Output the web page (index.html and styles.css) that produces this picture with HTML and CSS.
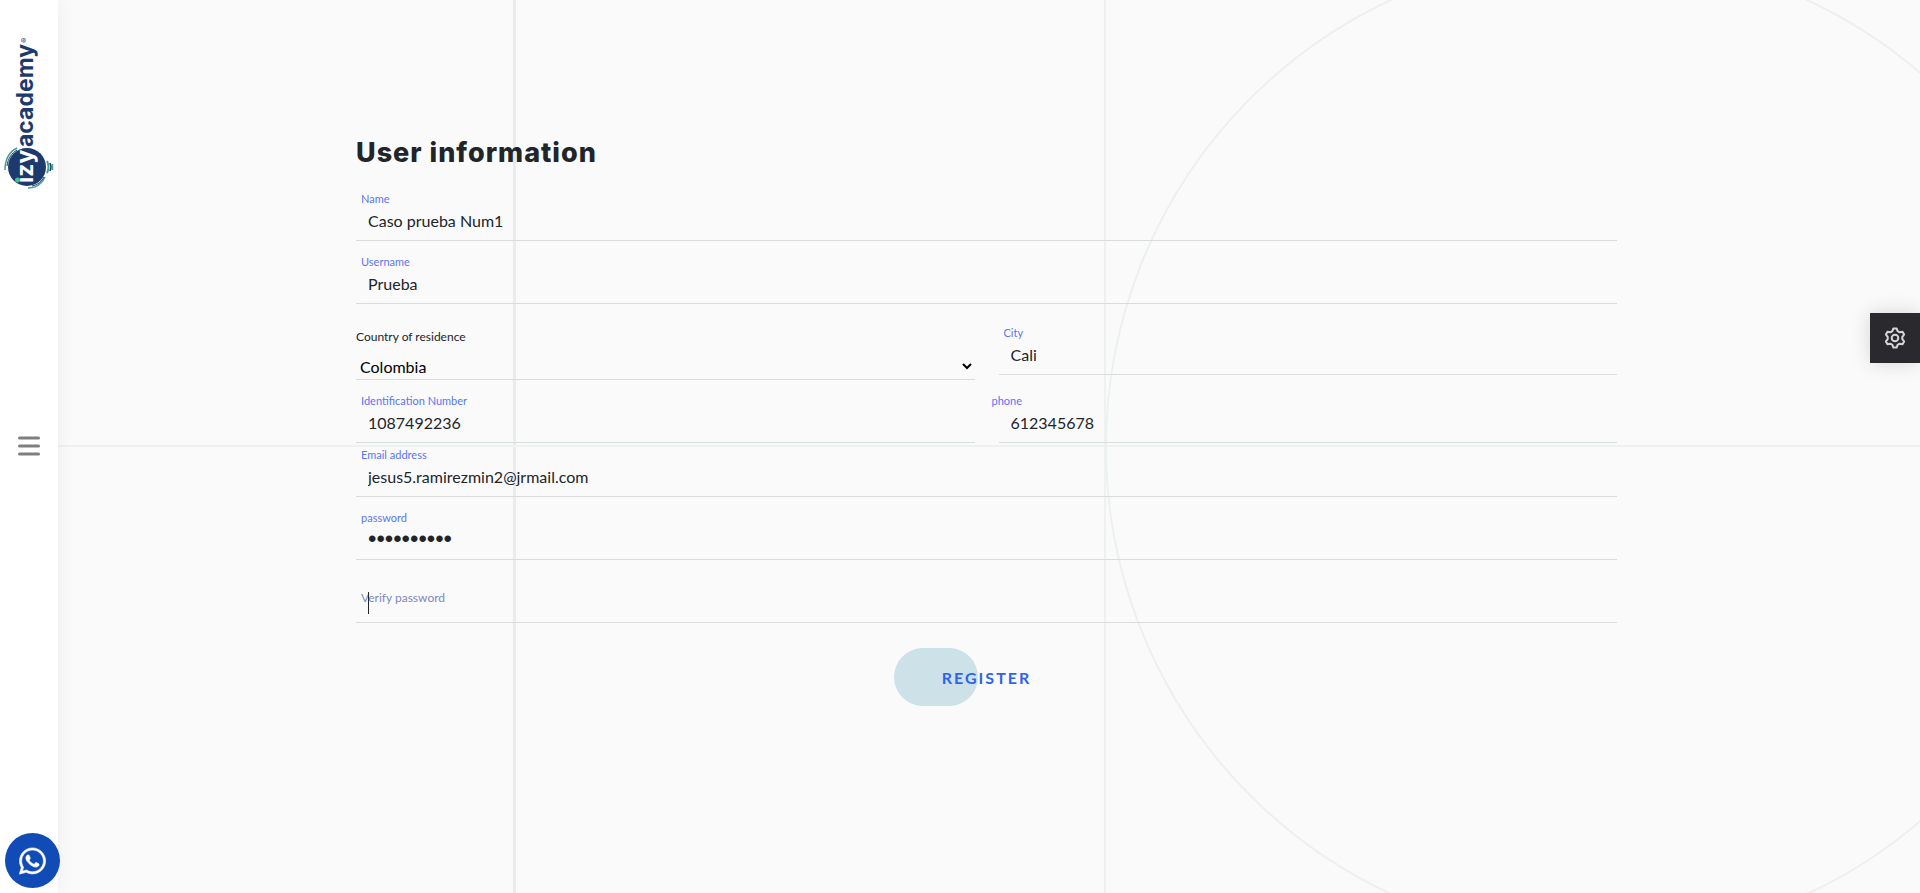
FILE: index.html
```html
<!DOCTYPE html>
<html lang="en">
<head>
<meta charset="utf-8">
<meta name="viewport" content="width=device-width, initial-scale=1">
<title>User information</title>
<link rel="stylesheet" href="styles.css">
</head>
<body>
<div class="page">
  <aside class="sidebar">
    <a class="logo" href="#" aria-label="izyacademy">
      <svg width="50" height="156" viewBox="0 0 50 156">
        <circle cx="23" cy="131" r="19" fill="#1d3a6e"/>
        <path d="M1 134C1 124 5 116 13 112" fill="none" stroke="#45a093" stroke-width="1.5"/>
        <path d="M3 130C4 122 8 117 13 114" fill="none" stroke="#1d3a6e" stroke-width="1"/>
        <path d="M24 152C32 152 38 148 41 141" fill="none" stroke="#45a093" stroke-width="1.5"/>
        <path d="M28 150C34 149 38 145 40 141" fill="none" stroke="#1d3a6e" stroke-width="1"/>
        <path d="M43 125Q46 131 43 137" fill="none" stroke="#45a093" stroke-width="2"/>
        <path d="M46 127Q48 131 46 135" fill="none" stroke="#1d3a6e" stroke-width="1.5"/>
        <path d="M48.500 128V134" stroke="#45a093" stroke-width="1.5"/>
        <g transform="translate(29 147) rotate(-90)">
          <text class="logo-izy" x="0" y="0">ızy</text>
          <text class="logo-word" x="36" y="0">academy</text>
          <text class="logo-mark" x="140" y="-6">®</text>
        </g>
        <circle cx="13.500" cy="144" r="2.500" fill="#3fc08f"/>
      </svg>
    </a>
    <button class="menu" type="button" aria-label="Menu"><span></span><span></span><span></span></button>
    <a class="chat" href="#" aria-label="WhatsApp">
      <svg width="27" height="30" viewBox="0 0 448 512"><path fill="#fff" stroke="#fff" stroke-width="10" d="M380.9 97.1C339 55.1 283.2 32 223.9 32c-122.4 0-222 99.6-222 222 0 39.100 10.200 77.300 29.600 111L0 480l117.700-30.900c32.400 17.700 68.900 27 106.100 27h.1c122.300 0 224.100-99.600 224.100-222 0-59.300-25.200-115-67.100-157zm-157 341.600c-33.200 0-65.700-8.900-94-25.700l-6.700-4-69.800 18.300L72 359.200l-4.400-7c-18.500-29.400-28.200-63.300-28.200-98.200 0-101.700 82.800-184.500 184.600-184.500 49.300 0 95.600 19.200 130.400 54.100 34.800 34.900 56.200 81.200 56.100 130.500 0 101.800-84.900 184.600-186.600 184.600zm101.200-138.200c-5.500-2.800-32.800-16.200-37.900-18-5.100-1.900-8.800-2.800-12.500 2.800-3.700 5.600-14.300 18-17.600 21.800-3.200 3.700-6.500 4.200-12 1.400-32.600-16.300-54-29.100-75.500-66-5.700-9.800 5.700-9.100 16.300-30.300 1.800-3.700.9-6.900-.5-9.700-1.400-2.800-12.500-30.100-17.100-41.200-4.500-10.800-9.100-9.300-12.500-9.500-3.200-.2-6.900-.2-10.600-.2-3.700 0-9.700 1.400-14.800 6.900-5.100 5.600-19.400 19-19.400 46.300 0 27.300 19.900 53.700 22.600 57.400 2.800 3.700 39.100 59.700 94.800 83.800 35.200 15.200 49 16.500 66.600 13.900 10.700-1.600 32.800-13.400 37.400-26.400 4.600-13 4.600-24.100 3.200-26.400-1.300-2.500-5-3.900-10.500-6.600z"/></svg>
    </a>
  </aside>

  <main class="main">
    <div class="art" aria-hidden="true">
      <i class="art-left"></i><i class="art-right"></i><i class="art-cross"></i><i class="art-circle"></i>
    </div>
    <form class="form">
      <h1 class="title">User information</h1>
      <div class="field">
        <label for="name">Name</label>
        <input id="name" type="text" value="Caso prueba Num1">
      </div>
      <div class="field">
        <label for="username">Username</label>
        <input id="username" type="text" value="Prueba">
      </div>
      <div class="row row-place">
        <div class="pick">
          <label for="country">Country of residence</label>
          <select id="country"><option>Colombia</option></select>
        </div>
        <div class="field">
          <label for="city">City</label>
          <input id="city" type="text" value="Cali">
        </div>
      </div>
      <div class="group">
        <div class="row">
          <div class="field">
            <label for="ident">Identification Number</label>
            <input id="ident" type="text" value="1087492236">
          </div>
          <div class="field field-phone">
            <label for="phone">phone</label>
            <input id="phone" type="tel" value="612345678">
          </div>
        </div>
        <div class="field">
          <label for="email">Email address</label>
          <input id="email" type="email" value="jesus5.ramirezmin2@jrmail.com">
        </div>
      </div>
      <div class="field field-secret">
        <label for="password">password</label>
        <input id="password" type="password" value="abcdefghij">
      </div>
      <div class="field field-verify">
        <label for="verify">Verify password</label>
        <input id="verify" type="password">
        <span class="caret"></span>
      </div>
      <button class="register" type="button"><span>REGISTER</span></button>
    </form>
  </main>

  <button class="settings" type="button" aria-label="Settings">
    <svg width="24" height="24" viewBox="-12 -12 24 24" fill="none" stroke="#d6d6d8" stroke-width="2" stroke-linejoin="round"><path d="M-1.600-9.600H1.600L2.600-6.900 4.700-5.700 7.500-6.200 9.100-3.400 7.300-1.200V1.200L9.100 3.400 7.500 6.200 4.700 5.700 2.600 6.900 1.600 9.600H-1.600L-2.600 6.900-4.700 5.700-7.500 6.200-9.100 3.400-7.300 1.200V-1.200L-9.100-3.400-7.500-6.200-4.700-5.700-2.600-6.900Z"/><circle r="3.300"/></svg>
  </button>
</div>
</body>
</html>
```

FILE: styles.css
```css
* { box-sizing: border-box; }

body {
  margin: 0;
  background: #fafafa;
  color: #212529;
  font-family: Lato, "Open Sans", sans-serif;
  font-size: 16px;
}

.page {
  display: flex;
  min-height: 100vh;
}

.sidebar {
  position: relative;
  z-index: 2;
  display: flex;
  flex: none;
  flex-direction: column;
  align-items: center;
  justify-content: space-between;
  width: 58px;
  padding: 36px 0 5px;
  background: #fff;
  box-shadow: 0 0 20px rgba(0, 0, 0, 0.06);
}

.logo { display: block; line-height: 0; }
.logo svg { overflow: visible; }
.logo-izy, .logo-word {
  font-family: Inter, sans-serif;
  font-weight: 700;
  font-size: 23px;
  fill: #1d3a6e;
}
.logo-izy { fill: #fff; }
.logo-mark { font-family: Inter, sans-serif; font-size: 8px; fill: #1d3a6e; }

.menu {
  position: absolute;
  top: 50%;
  left: 18px;
  display: flex;
  flex-direction: column;
  gap: 5px;
  width: 22px;
  padding: 0 0 2px;
  border: 0;
  background: none;
  transform: translateY(-50%);
}
.menu span { height: 3px; border-radius: 2px; background: #7f7f7f; }

.chat {
  display: flex;
  align-items: center;
  justify-content: center;
  width: 55px;
  height: 55px;
  margin-left: 7px;
  border-radius: 50%;
  background: #114bb5;
}

.main {
  position: relative;
  flex: 1;
  min-width: 0;
  padding: 137px 303px 40px 298px;
}

.art { position: absolute; inset: 0; overflow: hidden; }
.art i { position: absolute; }
.art-left { top: 0; bottom: 0; left: 455px; width: 3px; background: #e8ecee; }
.art-right { top: 0; bottom: 0; left: 1046px; width: 2px; background: #eff0f1; }
.art-cross { top: 50%; right: 0; left: 0; height: 2px; margin-top: -2px; background: #edf1f0; }
.art-circle {
  top: 50%;
  left: 1047px;
  width: 988px;
  height: 988px;
  margin-top: -494px;
  border: 2px solid #edf0f0;
  border-radius: 50%;
}

.form {
  position: relative;
  display: flex;
  flex-direction: column;
  gap: 9px;
}

.title {
  margin: 0 0 9px;
  font-family: Inter, sans-serif;
  font-size: 27px;
  font-weight: 800;
  line-height: 32px;
  letter-spacing: 1px;
}

.field {
  position: relative;
  display: flex;
  flex-direction: column;
  padding-top: 4px;
  border-bottom: 1px solid #d9dbdc;
}
.field label {
  padding-left: 5px;
  color: #5b74f5;
  font-size: 11px;
  line-height: 16px;
}
.field input {
  width: 100%;
  height: 26px;
  margin: 0 0 7px;
  padding: 0 12px;
  border: 0;
  outline: 0;
  background: none;
  color: inherit;
  font: inherit;
}
.field-phone label { margin-left: -12px; }
.field-secret input { font-family: "Liberation Sans", sans-serif; font-size: 24px; }

.row {
  display: grid;
  grid-template-columns: 1fr 1fr;
  gap: 24px;
  align-items: start;
}
.row-place { padding-top: 8px; }

.pick {
  display: flex;
  flex-direction: column;
  padding-top: 7px;
  border-bottom: 1px solid #d9dbdc;
}
.pick label { font-size: 12px; line-height: 18px; }
.pick select {
  width: 100%;
  height: 26px;
  margin-top: 7px;
  padding: 0;
  border: 0;
  background: none;
  color: #000;
  font: inherit;
}

.field-verify label {
  position: absolute;
  top: 21px;
  color: #7c88bd;
  font-size: 12px;
}
.field-verify input { margin-top: 16px; }
.caret {
  position: absolute;
  top: 23px;
  left: 12px;
  width: 1px;
  height: 22px;
  background: #212529;
}

.register {
  position: relative;
  align-self: center;
  height: 58px;
  margin-top: 16px;
  padding: 0 48px;
  border: 0;
  background: none;
  color: #2f62ee;
  font-family: inherit;
  font-size: 16px;
  font-weight: 700;
  letter-spacing: 2px;
}
.register::before {
  position: absolute;
  top: 0;
  left: 0;
  width: 84px;
  height: 58px;
  border-radius: 29px;
  background: #cde1e9;
  content: "";
}
.register span { position: relative; }

.settings {
  position: fixed;
  top: 313px;
  right: 0;
  z-index: 3;
  display: flex;
  align-items: center;
  justify-content: center;
  width: 50px;
  height: 50px;
  padding: 0;
  border: 0;
  background: #2a2a2e;
  box-shadow: 0 0 20px rgba(0, 0, 0, 0.15);
}
```
